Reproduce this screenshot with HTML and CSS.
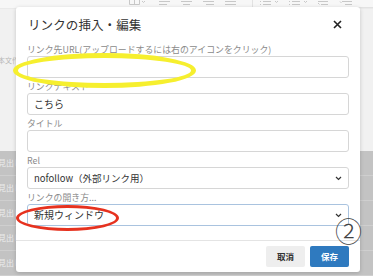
FILE: index.html
```html
<!DOCTYPE html>
<html lang="ja">
<head>
    <meta charset="UTF-8">
    <title>リンクの挿入・編集</title>
    <link rel="stylesheet" href="styles.css">
</head>
<body>
<div class="page">
    <div class="toolbar">
        <div class="tb-blank"></div>
        <div class="tb-group">
            <svg width="118" height="8" viewBox="0 0 118 8" fill="none" stroke="#c8c8c8" stroke-width="1">
                <path d="M0.5 0v4.5h10V0M5.5 0v4.5"/>
                <path d="M13 1l1.5 1.5L16 1"/>
                <path d="M30 1.5h11M30 4.5h8"/>
                <path d="M52 1.5h11M54 4.5h7"/>
                <path d="M74 1.5h11M77 4.5h8"/>
                <path d="M96 1.5h11M96 4.5h11"/>
            </svg>
        </div>
        <div class="tb-group last">
            <svg width="110" height="8" viewBox="0 0 110 8" fill="none" stroke="#c8c8c8" stroke-width="1">
                <path d="M2 1.5h1M5 1.5h8M2 4.5h1M5 4.5h8"/>
                <path d="M17 1l1.5 1.5L20 1"/>
                <path d="M31 1.5h1M34 1.5h8M31 4.5h1M34 4.5h8"/>
                <path d="M46 1l1.5 1.5L49 1"/>
                <path d="M60 1.5h10M63 4.5h7M60 3l1.5 1.5"/>
                <path d="M84 1.5h10M87 4.5h7M82 1.5l1.5 1.5"/>
            </svg>
        </div>
    </div>
    <div class="upper">
        <div class="side-text">本文作</div>
    </div>
    <div class="lower">
        <div class="row">見出し</div>
        <div class="row">見出し</div>
        <div class="row">見出し</div>
        <div class="row">見出し</div>
        <div class="row">見出し</div>
    </div>

    <div class="modal">
        <div class="modal-head">
            <div class="modal-title">リンクの挿入・編集</div>
            <svg class="close" width="9" height="9" viewBox="0 0 9 9"><path d="M1 1l7 7M8 1L1 8" stroke="#222" stroke-width="1.6"/></svg>
        </div>
        <div class="modal-body">
            <div class="label">リンク先URL(アップロードするには右のアイコンをクリック)</div>
            <div class="input"></div>
            <div class="label">リンクテキスト</div>
            <div class="input">こちら</div>
            <div class="label">タイトル</div>
            <div class="input"></div>
            <div class="label">Rel</div>
            <div class="input select">
                <span>nofollow（外部リンク用）</span>
                <svg class="chev" width="7" height="5" viewBox="0 0 7 5"><path d="M1 1l2.5 2.5L6 1" fill="none" stroke="#333" stroke-width="1.2"/></svg>
            </div>
            <div class="label">リンクの開き方...</div>
            <div class="input select focus">
                <span>新規ウィンドウ</span>
                <svg class="chev" width="7" height="5" viewBox="0 0 7 5"><path d="M1 1l2.5 2.5L6 1" fill="none" stroke="#333" stroke-width="1.2"/></svg>
            </div>
        </div>
        <div class="modal-foot">
            <button class="btn btn-cancel">取消</button>
            <button class="btn btn-save">保存</button>
        </div>
    </div>

    <div class="mark-yellow"></div>
    <div class="mark-red"></div>
    <div class="mark-num">②</div>
</div>
</body>
</html>
```

FILE: styles.css
```css
*{
    margin: 0;
    padding: 0;
    box-sizing: border-box;
    font-family: "Noto Sans CJK JP", "Noto Sans", sans-serif;
}
html, body{
    width: 373px;
    height: 276px;
    overflow: hidden;
    background-color: #f3f3f3;
}
.page{
    position: relative;
    width: 373px;
    height: 276px;
    overflow: hidden;
    display: flex;
    flex-direction: column;
}

/* 背景のエディタ */
.toolbar{
    height: 8px;
    display: flex;
    background-color: #f7f7f7;
    overflow: hidden;
}
.tb-blank{
    width: 130px;
}
.tb-group{
    display: flex;
    padding: 0 5px;
    border-bottom: 1px solid #e2e2e2;
    border-right: 1px solid #e2e2e2;
    flex: none;
}
.tb-group.last{
    flex: 1;
    border-right: none;
}
.upper{
    height: 145px;
    background-color: #f1f1f1;
    border-top: 1px solid #eaeaea;
    display: flex;
    align-items: flex-start;
}
.side-text{
    margin-top: 47px;
    margin-left: -2px;
    font-size: 7px;
    line-height: 9px;
    color: #b9b9b9;
    white-space: nowrap;
}
.lower{
    flex: 1;
    background-color: #c3c3c3;
}
.row{
    height: 25px;
    line-height: 24px;
    border-bottom: 1px solid #cfcfcf;
    font-size: 8px;
    color: #ececec;
    margin-left: -2px;
}

/* モーダル */
.modal{
    position: absolute;
    left: 16px;
    top: 7px;
    width: 344px;
    height: 265px;
    background-color: #fff;
    border-radius: 3px;
    box-shadow: 0 1px 4px rgba(0,0,0,0.18);
    display: flex;
    flex-direction: column;
}
.modal-head{
    height: 34px;
    display: flex;
    align-items: center;
    justify-content: space-between;
    padding: 0 18px 0 12px;
}
.modal-title{
    font-size: 12.5px;
    color: #333;
    letter-spacing: 0.1px;
}
.modal-body{
    padding: 0 11px;
    flex: 1;
}
.label{
    height: 15px;
    line-height: 17px;
    font-size: 8.9px;
    color: #8a8a8a;
    white-space: nowrap;
}
.input{
    height: 22px;
    border: 1px solid #d6d6d6;
    border-radius: 3px;
    padding: 0 6px;
    font-size: 10px;
    line-height: 20px;
    color: #333;
}
.select{
    display: flex;
    align-items: center;
    justify-content: space-between;
    font-size: 9.5px;
}
.select.focus{
    border-color: #a9c3df;
    font-size: 10px;
}
.modal-foot{
    height: 32px;
    border-top: 1px solid #e4e4e4;
    display: flex;
    justify-content: flex-end;
    align-items: center;
    gap: 5px;
    padding: 0 11px 1px;
}
.btn{
    height: 21px;
    width: 39px;
    border: none;
    border-radius: 2px;
    font-size: 8.5px;
    font-weight: bold;
}
.btn-cancel{
    background-color: #eeeeee;
    color: #333;
}
.btn-save{
    background-color: #2f7abf;
    color: #fff;
}

/* 注釈 */
.mark-yellow{
    position: absolute;
    left: 13px;
    top: 53px;
    width: 183px;
    height: 35px;
    border: 5px solid #f6ef2e;
    border-radius: 50%;
}
.mark-red{
    position: absolute;
    left: 16px;
    top: 205px;
    width: 103px;
    height: 26px;
    border: 3.5px solid #e6321f;
    border-radius: 50%;
}
.mark-num{
    position: absolute;
    left: 335px;
    top: 213px;
    font-size: 27px;
    line-height: 36px;
    font-weight: 300;
    color: #444;
}
```
